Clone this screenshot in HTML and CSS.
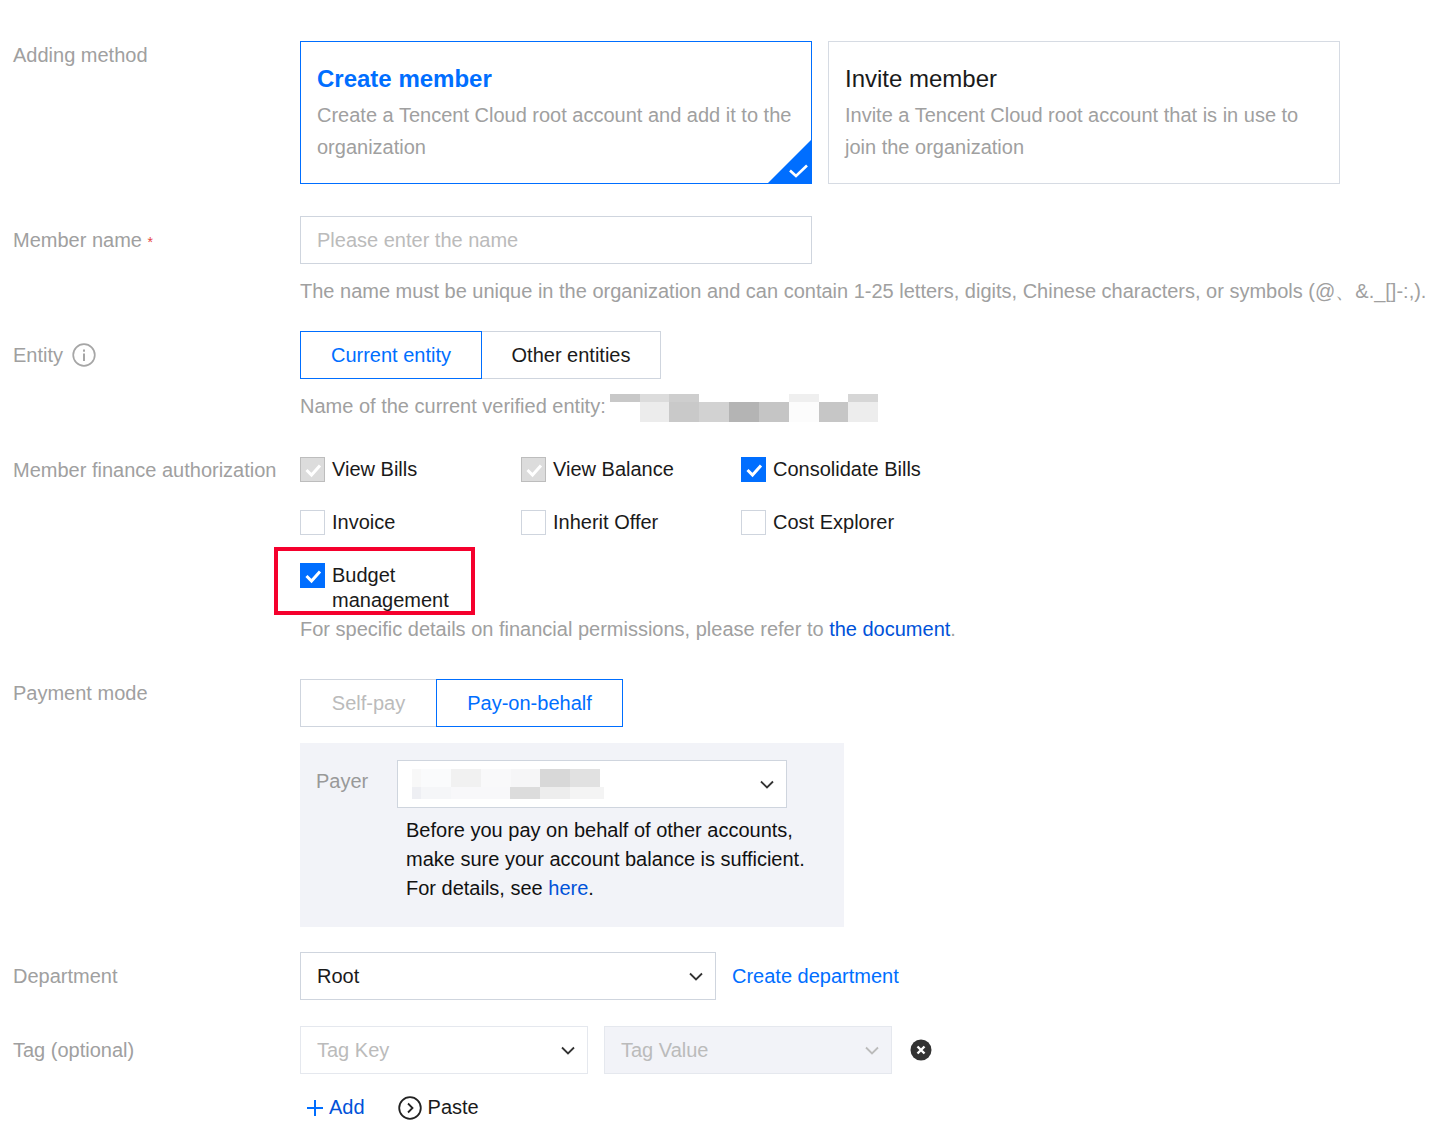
FILE: index.html
```html
<!DOCTYPE html>
<html lang="en">

<head>
  <meta charset="UTF-8">
  <meta name="viewport" content="width=device-width, initial-scale=1.0">
  <title>Add member</title>
  <link rel="stylesheet" href="styles.css">
</head>

<body>
  <form class="form">

    <div class="row row-method">
      <div class="row-label">Adding method</div>
      <div class="row-body cards">
        <div class="card card-active">
          <div class="card-title">Create member</div>
          <div class="card-text">Create a Tencent Cloud root account and add it to the organization</div>
          <span class="card-corner">
            <svg width="45" height="45" viewBox="0 0 45 45">
              <path d="M45 0V45H0Z" fill="#006eff" />
              <path d="M23 31.500L29 37L40 26.500" fill="none" stroke="#fff" stroke-width="2.600" />
            </svg>
          </span>
        </div>
        <div class="card">
          <div class="card-title">Invite member</div>
          <div class="card-text">Invite a Tencent Cloud root account that is in use to join the organization</div>
        </div>
      </div>
    </div>

    <div class="row row-name">
      <div class="row-label">Member name <span class="required">*</span></div>
      <div class="row-body">
        <div class="field field-name placeholder">Please enter the name</div>
        <div class="hint hint-name">The name must be unique in the organization and can contain 1-25 letters, digits, Chinese characters, or symbols (@、&amp;._[]-:,).</div>
      </div>
    </div>

    <div class="row row-entity">
      <div class="row-label label-icon">Entity
        <svg width="24" height="24" viewBox="0 0 24 24">
          <circle cx="12" cy="12" r="10.800" fill="none" stroke="#a6a6a6" stroke-width="1.700" />
          <rect x="11" y="10.500" width="2" height="7.500" fill="#a6a6a6" />
          <rect x="11" y="6.500" width="2" height="2.200" fill="#a6a6a6" />
        </svg>
      </div>
      <div class="row-body">
        <div class="segmented">
          <span class="segment segment-active segment-entity-a">Current entity</span>
          <span class="segment segment-entity-b">Other entities</span>
        </div>
        <div class="hint hint-entity">
          <span>Name of the current verified entity:</span>
          <svg class="mosaic" width="268" height="28" viewBox="0 0 268 28" shape-rendering="crispEdges">
            <rect x="0" y="0" width="30" height="8" fill="#c8c8c8" />
            <rect x="30" y="0" width="29" height="8" fill="#dcdcdc" />
            <rect x="59" y="0" width="30" height="8" fill="#cecece" />
            <rect x="179" y="0" width="30" height="8" fill="#efefef" />
            <rect x="238" y="0" width="30" height="8" fill="#d6d6d6" />
            <rect x="30" y="8" width="29" height="20" fill="#ececec" />
            <rect x="59" y="8" width="30" height="20" fill="#c9c9c9" />
            <rect x="89" y="8" width="30" height="20" fill="#d2d2d2" />
            <rect x="119" y="8" width="30" height="20" fill="#b4b4b4" />
            <rect x="149" y="8" width="30" height="20" fill="#c5c5c5" />
            <rect x="179" y="8" width="30" height="20" fill="#fcfcfc" />
            <rect x="209" y="8" width="29" height="20" fill="#c6c6c6" />
            <rect x="238" y="8" width="30" height="20" fill="#ededed" />
          </svg>
        </div>
      </div>
    </div>

    <div class="row row-finance">
      <div class="row-label">Member finance authorization</div>
      <div class="row-body">
        <div class="checks">
          <div class="check">
            <span class="box box-disabled"><svg width="24" height="24" viewBox="0 0 24 24"><path d="M5.500 12L10.500 17L19 7.500" fill="none" stroke="#fff" stroke-width="3" /></svg></span>
            <span>View Bills</span>
          </div>
          <div class="check">
            <span class="box box-disabled"><svg width="24" height="24" viewBox="0 0 24 24"><path d="M5.500 12L10.500 17L19 7.500" fill="none" stroke="#fff" stroke-width="3" /></svg></span>
            <span>View Balance</span>
          </div>
          <div class="check">
            <span class="box box-checked"><svg width="24" height="24" viewBox="0 0 24 24"><path d="M5.500 12L10.500 17L19 7.500" fill="none" stroke="#fff" stroke-width="3" /></svg></span>
            <span>Consolidate Bills</span>
          </div>
          <div class="check"><span class="box"></span><span>Invoice</span></div>
          <div class="check"><span class="box"></span><span>Inherit Offer</span></div>
          <div class="check"><span class="box"></span><span>Cost Explorer</span></div>
          <div class="check check-budget">
            <span class="box box-checked"><svg width="24" height="24" viewBox="0 0 24 24"><path d="M5.500 12L10.500 17L19 7.500" fill="none" stroke="#fff" stroke-width="3" /></svg></span>
            <span class="check-wrap">Budget management</span>
            <span class="callout"></span>
          </div>
        </div>
        <div class="hint hint-finance">For specific details on financial permissions, please refer to <a class="doc-link">the document</a>.</div>
      </div>
    </div>

    <div class="row row-payment">
      <div class="row-label">Payment mode</div>
      <div class="row-body">
        <div class="segmented">
          <span class="segment segment-disabled segment-pay-a">Self-pay</span>
          <span class="segment segment-active segment-pay-b">Pay-on-behalf</span>
        </div>
        <div class="panel">
          <div class="panel-head">
            <span class="panel-label">Payer</span>
            <div class="field field-payer">
              <svg class="mosaic" width="192" height="30" viewBox="0 0 192 30" shape-rendering="crispEdges">
                <rect x="0" y="0" width="9" height="18" fill="#f8f8f8" />
                <rect x="9" y="0" width="30" height="18" fill="#fafbfc" />
                <rect x="39" y="0" width="30" height="18" fill="#f1f1f1" />
                <rect x="69" y="0" width="30" height="18" fill="#f9f9fa" />
                <rect x="99" y="0" width="29" height="18" fill="#f6f6f7" />
                <rect x="128" y="0" width="30" height="18" fill="#d8d8d8" />
                <rect x="158" y="0" width="30" height="18" fill="#e1e1e1" />
                <rect x="0" y="18" width="9" height="12" fill="#eeeff3" />
                <rect x="9" y="18" width="30" height="12" fill="#f5f6f8" />
                <rect x="39" y="18" width="59" height="12" fill="#f8f8fa" />
                <rect x="98" y="18" width="30" height="12" fill="#dcdcdc" />
                <rect x="128" y="18" width="30" height="12" fill="#ededed" />
                <rect x="158" y="18" width="34" height="12" fill="#f4f4f4" />
              </svg>
              <svg class="chevron" width="14" height="9" viewBox="0 0 14 9"><path d="M1 1.500L7 7.500L13 1.500" fill="none" stroke="#333" stroke-width="1.800" /></svg>
            </div>
          </div>
          <div class="panel-text">Before you pay on behalf of other accounts, make sure your account balance is sufficient. For details, see <a class="doc-link">here</a>.</div>
        </div>
      </div>
    </div>

    <div class="row row-department">
      <div class="row-label">Department</div>
      <div class="row-body inline">
        <div class="field field-dept">
          <span>Root</span>
          <svg class="chevron" width="14" height="9" viewBox="0 0 14 9"><path d="M1 1.500L7 7.500L13 1.500" fill="none" stroke="#333" stroke-width="1.800" /></svg>
        </div>
        <a class="create-link">Create department</a>
      </div>
    </div>

    <div class="row row-tag">
      <div class="row-label">Tag (optional)</div>
      <div class="row-body">
        <div class="inline tag-fields">
          <div class="field field-tag placeholder">
            <span>Tag Key</span>
            <svg class="chevron" width="14" height="9" viewBox="0 0 14 9"><path d="M1 1.500L7 7.500L13 1.500" fill="none" stroke="#333" stroke-width="1.800" /></svg>
          </div>
          <div class="field field-tag field-off placeholder">
            <span>Tag Value</span>
            <svg class="chevron" width="14" height="9" viewBox="0 0 14 9"><path d="M1 1.500L7 7.500L13 1.500" fill="none" stroke="#bbb" stroke-width="1.800" /></svg>
          </div>
          <svg class="tag-remove" width="22" height="22" viewBox="0 0 22 22">
            <circle cx="11" cy="11" r="10.500" fill="#333" />
            <path d="M7.500 7.500L14.500 14.500M14.500 7.500L7.500 14.500" stroke="#fff" stroke-width="2.400" />
          </svg>
        </div>
        <div class="tag-actions">
          <a class="add-link">
            <svg width="16" height="16" viewBox="0 0 16 16"><path d="M8 0V16M0 8H16" stroke="#006eff" stroke-width="2" /></svg>
            Add
          </a>
          <span class="paste">
            <svg width="24" height="24" viewBox="0 0 24 24">
              <circle cx="12" cy="12" r="10.800" fill="none" stroke="#222" stroke-width="1.800" />
              <path d="M10 7.500L14.500 12L10 16.500" fill="none" stroke="#222" stroke-width="1.800" />
            </svg>
            Paste
          </span>
        </div>
      </div>
    </div>

  </form>
</body>

</html>
```

FILE: styles.css
```css
* {
  box-sizing: border-box;
}

html,
body {
  margin: 0;
  height: 1132px;
  overflow: hidden;
}

body {
  font-family: 'Liberation Sans', Arial, sans-serif;
  font-size: 20px;
  line-height: 25px;
  color: #1a1a1a;
  background: #fff;
}

.form {
  padding-top: 41px;
}

.row {
  display: flex;
}

.row-label {
  flex: none;
  width: 300px;
  padding-left: 13px;
  color: #a0a0a0;
}

.row-body {
  flex: none;
}

.inline {
  display: flex;
  align-items: center;
}

/* rows */
.row-method .row-label {
  padding-top: 2px;
}

.row-name {
  margin-top: 32px;
}

.row-name .row-label,
.row-entity .row-label,
.row-department .row-label,
.row-tag .row-label {
  padding-top: 12px;
}

.row-entity {
  margin-top: 28px;
}

.row-finance {
  margin-top: 39px;
}

.row-finance .row-label {
  padding-top: 1px;
}

.row-payment {
  margin-top: 38px;
}

.row-payment .row-label {
  padding-top: 2px;
}

.row-department {
  margin-top: 25px;
}

.row-tag {
  margin-top: 26px;
}

.required {
  color: #e54545;
  font-size: 14px;
}

.label-icon {
  display: flex;
  align-items: flex-start;
  gap: 9px;
  height: 48px;
}

/* adding method cards */
.cards {
  display: flex;
  gap: 16px;
}

.card {
  position: relative;
  width: 512px;
  height: 143px;
  padding: 22px 16px 0;
  border: 1px solid #d6dbe3;
}

.card-active {
  border-color: #006eff;
}

.card-title {
  font-size: 24px;
  line-height: 30px;
}

.card-active .card-title {
  color: #006eff;
  font-weight: 700;
}

.card-text {
  margin-top: 5px;
  color: #a0a0a0;
  line-height: 32px;
}

.card-corner {
  position: absolute;
  right: -1px;
  bottom: -1px;
  display: block;
  width: 45px;
  height: 45px;
}

.card-corner svg {
  display: block;
}

/* inputs and selects */
.field {
  display: flex;
  align-items: center;
  justify-content: space-between;
  height: 48px;
  padding: 0 16px;
  border: 1px solid #cfd5de;
  background: #fff;
}

.placeholder {
  color: #bbb;
}

.field-name {
  width: 512px;
}

.field-payer {
  width: 390px;
  padding: 0 12px 0 14px;
}

.field-dept {
  width: 416px;
  padding-right: 12px;
}

.field-tag {
  width: 288px;
  padding-right: 12px;
  border-color: #e5e8ee;
}

.field-off {
  background: #f2f3f8;
}

.mosaic {
  display: block;
  flex: none;
}

.chevron {
  display: block;
  flex: none;
}

/* hints */
.hint {
  color: #a0a0a0;
  line-height: 24px;
}

.hint-name {
  margin-top: 15px;
  white-space: nowrap;
}

.hint-entity {
  display: flex;
  gap: 4px;
  height: 24px;
  margin-top: 15px;
}

.hint-finance {
  margin-top: 4px;
}

.doc-link {
  color: #0052d9;
}

/* segmented buttons */
.segmented {
  display: flex;
}

.segment {
  display: block;
  height: 48px;
  line-height: 46px;
  text-align: center;
  border: 1px solid #cfd5de;
}

.segment-active {
  color: #006eff;
  border-color: #006eff;
}

.segment-disabled {
  color: #bbb;
  border-right: 0;
}

.segment-entity-a {
  width: 182px;
}

.segment-entity-b {
  width: 179px;
  border-left: 0;
}

.segment-pay-a {
  width: 136px;
}

.segment-pay-b {
  width: 187px;
}

/* checkboxes */
.checks {
  display: grid;
  grid-template-columns: 221px 220px 221px;
  row-gap: 28px;
  margin-top: 0;
}

.check {
  position: relative;
  display: flex;
  gap: 7px;
}

.box {
  flex: none;
  display: block;
  width: 25px;
  height: 25px;
  border: 1px solid #cfd5de;
}

.box svg {
  display: block;
}

.box-disabled {
  background: #dcdcdc;
  border-color: #bdbdbd;
}

.box-checked {
  background: #006eff;
  border-color: #006eff;
}

.check-wrap {
  width: 130px;
}

.callout {
  position: absolute;
  left: -26px;
  top: -16px;
  width: 201px;
  height: 68px;
  border: 4px solid #f5002d;
}

/* payer panel */
.panel {
  width: 544px;
  height: 184px;
  margin-top: 16px;
  padding: 17px 16px 0;
  background: #f2f3f8;
}

.panel-head {
  display: flex;
}

.panel-label {
  flex: none;
  width: 81px;
  padding-top: 9px;
  color: #999;
}

.panel-text {
  margin-left: 90px;
  width: 430px;
  margin-top: 8px;
  line-height: 29px;
  color: #111;
}

/* department */
.create-link {
  margin-left: 16px;
  color: #006eff;
}

/* tags */
.tag-fields {
  gap: 16px;
}

.tag-remove {
  margin-left: 2px;
}

.tag-actions {
  display: flex;
  align-items: center;
  gap: 33px;
  margin-top: 21px;
  padding-left: 7px;
}

.add-link {
  display: flex;
  align-items: center;
  gap: 6px;
  color: #0052d9;
}

.paste {
  display: flex;
  align-items: center;
  gap: 6px;
}
```
